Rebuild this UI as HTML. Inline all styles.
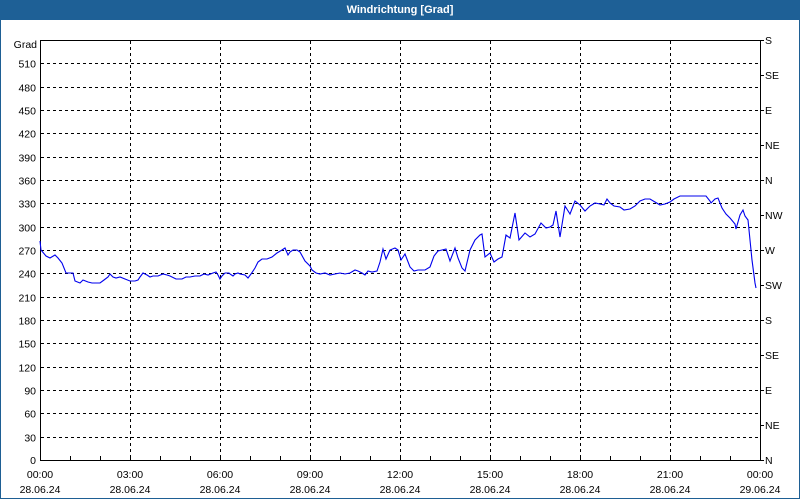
<!DOCTYPE html>
<html><head><style>
body{margin:0;width:800px;height:500px;overflow:hidden;background:#fff;font-family:"Liberation Sans",sans-serif;}
#w{position:absolute;left:0;top:0;width:798px;height:498px;border:1px solid #1e5f94;border-top:none;}
#t{position:absolute;left:0;top:0;width:800px;height:20px;background:#1e6096;color:#fff;font:bold 11px "Liberation Sans",sans-serif;text-align:center;line-height:20px;}
svg{position:absolute;left:0;top:0}
text{font-family:"Liberation Sans",sans-serif;font-size:10.5px;fill:#000}
</style></head><body>
<div id="w"></div>
<div id="t">Windrichtung [Grad]</div>
<svg width="800" height="500" viewBox="0 0 800 500" id="s">
<g stroke="#000" stroke-dasharray="3,3" stroke-width="1" shape-rendering="crispEdges" id="grid"></g>
<g stroke="#000" stroke-width="1" shape-rendering="crispEdges" fill="none">
<line x1="40.5" y1="40" x2="40.5" y2="461"/>
<line x1="40" y1="40.5" x2="760" y2="40.5"/>
<line x1="760.5" y1="40" x2="760.5" y2="461"/>
<line x1="40" y1="460.5" x2="761" y2="460.5"/>
<g id="ticks"></g>
</g>
<g id="labels"></g>
<polyline fill="none" stroke="#0000ee" stroke-width="1.1" points="40,241 41,250 46,256 50,258 55,255 58,258 62,263 66,273 70,273 73,273 75,281 80,283 83,280 88,282 92,283 96,283 100,283 104,280 108,277 110,274 113,277 116,278 120,277 125,279 130,281 135,281 138,280 140,277 143,273 147,275 150,277 153,276 158,276 163,274 167,275 170,276 176,279 182,279 186,277 190,277 195,276 200,276 204,274 208,275 213,273 216,272 218,275 220,279 222,276 225,273 229,273 230,274 233,276 235,274 238,273 240,274 245,275 248,278 251,274 255,268 258,262 262,259 267,259 272,257 277,253 282,250 285,248 288,255 290,252 293,250 297,250 300,252 305,261 310,266 312,270 316,273 320,274 325,273 330,275 335,274 340,273 345,274 350,273 355,270 358,271 362,273 365,275 368,271 372,272 377,271 380,262 383,249 386,259 390,250 395,248 398,250 401,260 405,254 410,267 414,271 418,270 422,270 425,270 430,267 434,256 438,251 442,250 446,249 450,261 455,248 458,258 462,268 465,271 470,250 475,240 480,235 482,234 485,257 490,253 494,262 498,259 502,257 506,235 510,238 515,213 519,240 525,233 530,237 535,234 541,223 546,228 550,227 553,225 556,211 560,237 565,206 570,214 575,201 580,205 585,211 590,206 595,203 600,204 604,205 607,199 610,203 614,206 620,207 624,210 630,209 635,206 640,201 645,199 650,199 655,202 660,205 665,204 670,202 674,199 680,196 688,196 700,196 706,196 710,201 711,203 715,199 718,198 722,208 726,214 730,218 735,224 736,229 740,215 743,210 745,216 748,220 750,240 752,260 755,283 756,288"/>
</svg>
<script>
var ns="http://www.w3.org/2000/svg";
function el(p,n,a,t){var e=document.createElementNS(ns,n);for(var k in a)e.setAttribute(k,a[k]);if(t!=null)e.textContent=t;document.getElementById(p).appendChild(e);}
for(var i=1;i<18;i++){var y=Math.round(460-i*420/18)+0.5;el("grid","line",{x1:41,x2:760,y1:y,y2:y});el("labels","text",{x:36,y:y+4,"text-anchor":"end"},String(i*30));}
el("labels","text",{x:36,y:464,"text-anchor":"end"},"0");
el("labels","text",{x:37,y:48,"text-anchor":"end"},"Grad");
for(var j=1;j<8;j++){var x=40+j*90+0.5;el("grid","line",{x1:x,x2:x,y1:41,y2:460});}
for(var h=1;h<24;h++){var x=40+h*30+0.5;el("ticks","line",{x1:x,x2:x,y1:456,y2:460});}
var tl=["00:00","03:00","06:00","09:00","12:00","15:00","18:00","21:00","00:00"];
for(var j=0;j<9;j++){var x=40+j*90;el("labels","text",{x:x,y:478,"text-anchor":"middle"},tl[j]);el("labels","text",{x:x,y:493,"text-anchor":"middle"},j==8?"29.06.24":"28.06.24");}
var d=["S","SE","E","NE","N","NW","W","SW","S","SE","E","NE","N"];
for(var k=0;k<13;k++){var y=40+k*35;el("ticks","line",{x1:760,x2:764,y1:y+0.5,y2:y+0.5});el("labels","text",{x:765,y:y+4},d[k]);}
</script>
</body></html>
